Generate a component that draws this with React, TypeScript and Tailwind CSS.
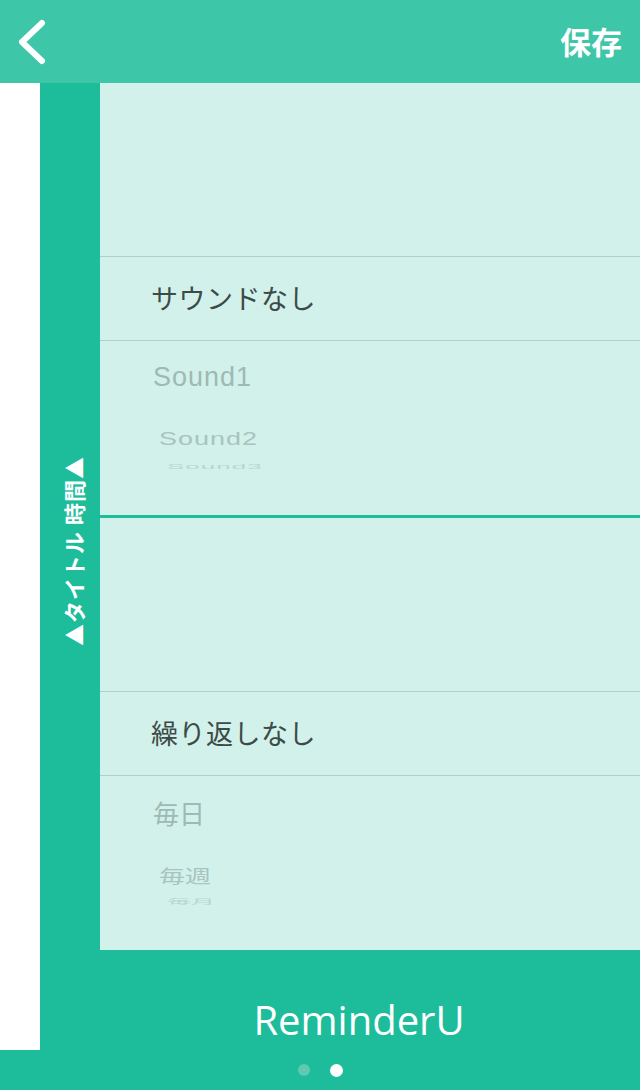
import React from 'react';

const jp = { fontFamily: '"Noto Sans CJK JP", "Noto Sans", sans-serif' };

interface WheelProps {
  selected: string;
  next: string;
  second: string;
  after: string;
  latin?: boolean;
}

const Wheel: React.FC<WheelProps> = ({ selected, next, second, after, latin }) => {
  const font = latin ? { fontFamily: '"Liberation Sans", Arial, sans-serif' } : jp;
  return (
    <div className="h-[432px] flex flex-col overflow-hidden">
      {/* empty rows above the selection */}
      <div className="h-[174px] border-b border-[#b3cdc8]" />
      {/* selected row */}
      <div className="h-[84px] border-b border-[#b3cdc8] flex items-center pl-[51px]">
        <span className="text-[27px] tracking-[0.5px] text-[#3d4b48]" style={jp}>{selected}</span>
      </div>
      {/* rows below, fading away */}
      <div className="flex-1 flex flex-col pt-[21px] overflow-hidden">
        <div className="h-[30px] flex items-center pl-[53px]">
          <span className={latin ? 'text-[27px] tracking-[1px] text-[#9fb9b4]' : 'text-[26px] text-[#9fb9b4]'} style={font}>{next}</span>
        </div>
        <div className="h-[30px] mt-[32px] flex items-center pl-[59px]">
          <span className={(latin ? 'text-[27px] tracking-[1px]' : 'text-[26px]') + ' text-[#a9c3be] inline-block scale-y-[0.7] origin-center'} style={font}>{second}</span>
        </div>
        <div className="h-[12px] mt-[6px] flex items-center pl-[67px] overflow-hidden">
          <span className={(latin ? 'text-[26px] tracking-[1px]' : 'text-[24px]') + ' text-[#bad5d0] inline-block scale-y-[0.3] origin-center'} style={font}>{after}</span>
        </div>
      </div>
    </div>
  );
};

export default function App() {
  return (
    <div className="w-[640px] h-[1090px] bg-white flex flex-col overflow-hidden">
      {/* Header */}
      <div className="h-[83px] bg-[#3ec6a9] flex items-center justify-between pl-[14px] pr-[18px]">
        <svg width="34" height="46" viewBox="0 0 34 46" fill="none">
          <path d="M28 4 L8 23 L28 42" stroke="white" strokeWidth="6" strokeLinecap="round" strokeLinejoin="round" />
        </svg>
        <span className="text-[31px] font-bold text-white" style={jp}>保存</span>
      </div>

      <div className="flex-1 flex flex-col">
        <div className="flex">
          <div className="w-[40px] bg-white" />
          {/* Side tab */}
          <div className="w-[60px] bg-[#1dbc9b] flex items-center justify-center pt-[68px] pl-[6px]">
            <span
              className="text-[22px] tracking-[1px] font-bold text-white whitespace-nowrap [writing-mode:vertical-rl] [text-orientation:sideways] rotate-180"
              style={jp}
            >
              ▲タイトル 時間▲
            </span>
          </div>
          {/* Pickers */}
          <div className="flex-1 bg-[#d2f1eb] flex flex-col">
            <Wheel selected="サウンドなし" next="Sound1" second="Sound2" after="Sound3" latin />
            <div className="h-[3px] bg-[#1dbc9b]" />
            <Wheel selected="繰り返しなし" next="毎日" second="毎週" after="毎月" />
          </div>
        </div>

        {/* Footer */}
        <div className="flex">
          <div className="w-[40px] h-[100px] bg-white" />
          <div className="flex-1 h-[100px] bg-[#1dbc9b] flex items-center justify-center pl-[38px] pt-[40px]">
            <span className="text-[40px] text-white leading-none" style={{ fontFamily: '"Open Sans", "Noto Sans", sans-serif' }}>
              ReminderU
            </span>
          </div>
        </div>
        <div className="flex-1 bg-[#1dbc9b] flex items-center justify-center">
          <div className="flex items-center gap-[20px]">
            <span className="w-[12px] h-[12px] rounded-full bg-[#5fc9b2]" />
            <span className="w-[13px] h-[13px] rounded-full bg-white" />
          </div>
        </div>
      </div>
    </div>
  );
}
